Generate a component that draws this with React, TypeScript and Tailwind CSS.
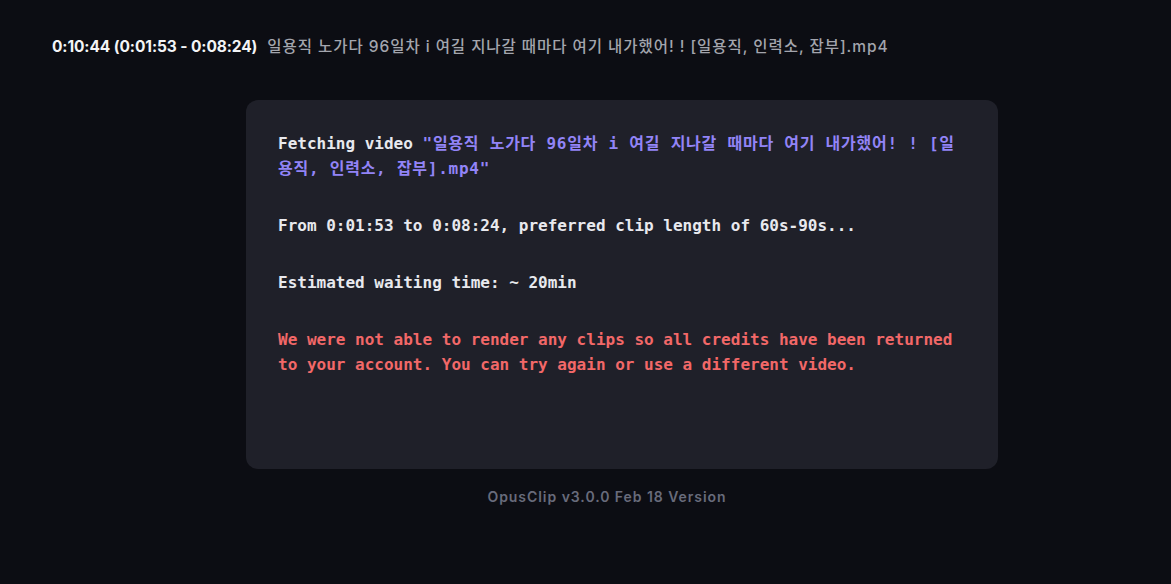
const fileName = "일용직 노가다 96일차 i 여길 지나갈 때마다 여기 내가했어! ! [일용직, 인력소, 잡부].mp4";

export default function App() {
  return (
    <div className="min-h-screen w-full bg-[#0c0d13] font-['Inter','Noto_Sans_CJK_KR',sans-serif] text-white">
      <header className="flex items-center gap-[10px] px-[52px] pt-[36px] text-[15.5px] leading-[22px]">
        <span className="font-bold tracking-[-0.1px] text-[#f3f4f6]">0:10:44 (0:01:53 - 0:08:24)</span>
        <span className="font-medium tracking-[0.95px] text-[#a3a5ad]">{fileName}</span>
      </header>

      <main className="mt-[42px] flex flex-col pl-[246px] pr-[173px]">
        <div className="h-[369px] rounded-[12px] bg-[#1f2029] px-8 pt-[31px] font-['DejaVu_Sans_Mono','Noto_Sans_CJK_KR',monospace] text-[16px] font-bold leading-[25px]">
          <div className="flex flex-col gap-8">
            <p className="break-all text-[#e8e9ee]">
              Fetching video <span className="tracking-[0.75px] text-[#9284f7]">"{fileName}"</span>
            </p>
            <p className="text-[#e8e9ee]">From 0:01:53 to 0:08:24, preferred clip length of 60s-90s...</p>
            <p className="text-[#e8e9ee]">Estimated waiting time: ~ 20min</p>
            <p className="text-[#f26868]">
              We were not able to render any clips so all credits have been returned to your account. You can try again or use a different video.
            </p>
          </div>
        </div>
        <p className="mt-[17px] pr-[30px] text-center text-[14px] font-semibold tracking-[0.95px] text-[#686b7b]">OpusClip v3.0.0 Feb 18 Version</p>
      </main>
    </div>
  );
}
